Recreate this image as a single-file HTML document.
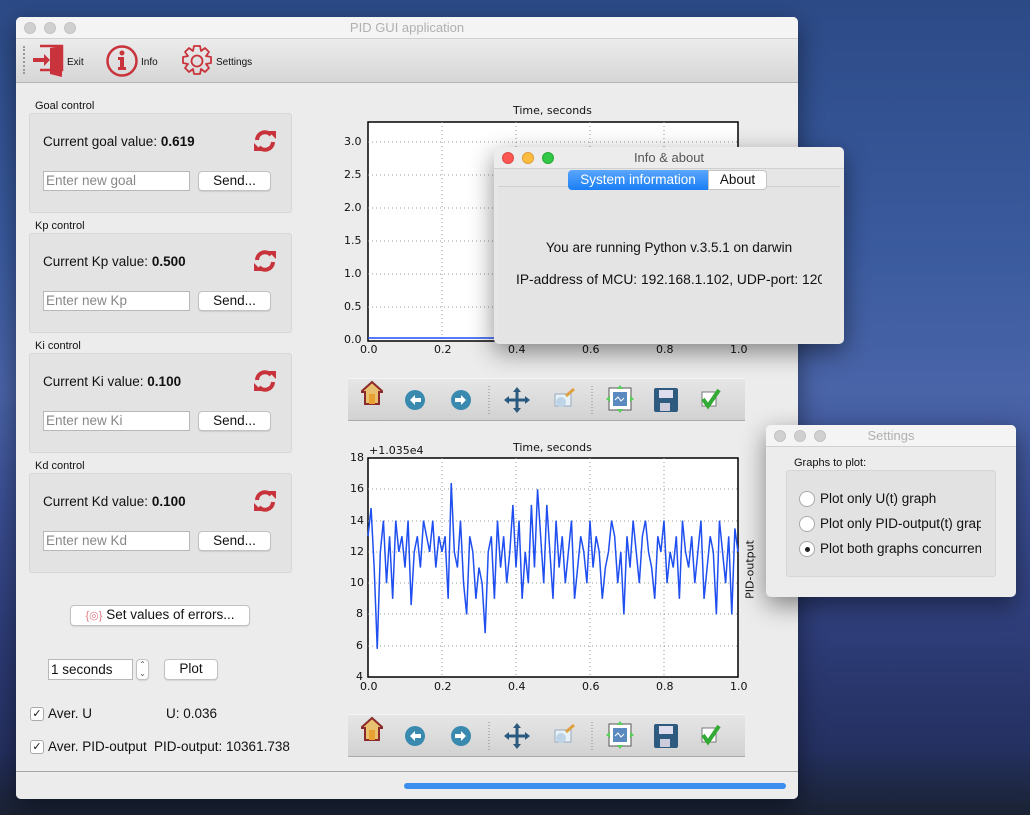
<!DOCTYPE html>
<html><head><meta charset="utf-8">
<style>
*{box-sizing:border-box;margin:0;padding:0}
body{width:1030px;height:815px;overflow:hidden;position:relative;font-family:"Liberation Sans",sans-serif;color:#111;
background:linear-gradient(180deg,#2c4a86 0%,#3a5a9e 30%,#4a64a8 48%,#3a4e92 62%,#2c3a74 80%,#243060 92%,#1a2232 100%);}
.abs{position:absolute}
.win{position:absolute;background:#ececec;border-radius:5px;box-shadow:0 8px 25px rgba(0,0,0,.45)}
.tb{position:absolute;left:0;right:0;top:0;height:21px;background:#f4f4f4;border-bottom:1px solid #d0d0d0;border-radius:5px 5px 0 0;text-align:center;font-size:13px;color:#b0b0b0;line-height:21px}
.dot{position:absolute;top:5px;width:12px;height:12px;border-radius:50%;background:#d0d0d0;border:1px solid #c4c4c4}
.lbl{position:absolute;font-size:11px}
.grp{position:absolute;left:29px;width:263px;height:100px;background:#e3e3e3;border:1px solid #d6d6d6;border-radius:3px}
.cur{position:absolute;left:13px;top:20px;font-size:13.5px}
.inp{position:absolute;left:13px;top:57px;width:147px;height:20px;background:#fff;border:1px solid #b8b8b8;font-size:13.5px;color:#888;padding-left:2px;line-height:18px}
.btn{position:absolute;background:#fff;border:1px solid #c2c2c2;border-radius:4px;font-size:13.5px;text-align:center;line-height:18px;box-shadow:0 1px 1px rgba(0,0,0,.1)}
.ref{position:absolute;left:222px;top:14px}
.ptb{position:absolute;left:348px;width:397px;height:43px;background:linear-gradient(#e6e6e6,#d2d2d2);border-bottom:1px solid #aaa;border-top:1px solid #f4f4f4}
.tick{position:absolute;font-size:11px;font-family:"DejaVu Sans",sans-serif;color:#111}
.cb{position:absolute;left:30px;width:14px;height:14px;background:#fff;border:1px solid #aaa;border-radius:3px;font-size:11px;line-height:12px;text-align:center}
.rad{position:absolute;left:799px;width:16px;height:16px;border-radius:50%;background:#fff;border:1px solid #aaa}
</style></head><body>

<!-- main window -->
<div class="win" style="left:16px;top:17px;width:782px;height:782px;">
  <div class="tb" style="height:22px">PID GUI application</div>
  <div class="dot" style="left:8px"></div><div class="dot" style="left:28px"></div><div class="dot" style="left:48px"></div>
  <div class="abs" style="left:0;top:22px;width:782px;height:44px;background:linear-gradient(#ececec,#d6d6d6);border-bottom:1px solid #b4b4b4"></div>
  <div class="abs" style="left:0;bottom:0;width:782px;height:28px;background:#ececec;border-top:1px solid #a8a8a8;border-radius:0 0 5px 5px"></div>
  <div class="abs" style="left:388px;top:766px;width:382px;height:6px;border-radius:3px;background:#3b8ef0"></div>
</div>

<!-- toolbar -->
<div class="abs" style="left:23px;top:46px;width:2px;height:28px;border-left:2px dotted #999"></div>
<svg class="abs" style="left:30px;top:43px" width="36" height="36" viewBox="0 0 36 36">
  <path d="M10 3h22v24h-22" fill="none" stroke="#c9333b" stroke-width="2.5"/>
  <path d="M20 5l12-2v31l-12-3z" fill="#c9333b"/>
  <path d="M3 15h11v-4l6 6-6 6v-4h-11z" fill="#c9333b"/>
</svg>
<div class="lbl" style="left:67px;top:57px;font-size:10px">Exit</div>
<svg class="abs" style="left:105px;top:44px" width="34" height="34" viewBox="0 0 34 34">
  <circle cx="17" cy="17" r="14.5" fill="none" stroke="#c9333b" stroke-width="2.5"/>
  <circle cx="17" cy="9" r="2.5" fill="#c9333b"/>
  <path d="M13 13h6v10h2v3h-8v-3h2v-7h-2z" fill="#c9333b"/>
</svg>
<div class="lbl" style="left:141px;top:57px;font-size:10px">Info</div>
<svg class="abs" style="left:180px;top:44px" width="34" height="34" viewBox="-17 -17 34 34">
  <path d="M-3 -15h6l1 5 4-3 4 4-3 4 5 1v6l-5 1 3 4-4 4-4-3-1 5h-6l-1-5-4 3-4-4 3-4-5-1v-6l5-1-3-4 4-4 4 3z" fill="none" stroke="#c9333b" stroke-width="1.8" stroke-linejoin="round"/>
  <circle r="5.5" fill="none" stroke="#c9333b" stroke-width="1.8"/>
</svg>
<div class="lbl" style="left:216px;top:57px;font-size:10px">Settings</div>

<!-- groups -->
<div class="lbl" style="left:35px;top:100px">Goal control</div>
<div class="grp" style="top:113px"><div class="cur">Current goal value: <b>0.619</b></div>
<svg class="ref" width="26" height="26" viewBox="-13 -13 26 26"><path d="M-8 -1a8 8 0 0 1 14-5" fill="none" stroke="#c9333b" stroke-width="4"/><path d="M3 -10l8 0 0 8z" fill="#c9333b"/><path d="M8 1a8 8 0 0 1-14 5" fill="none" stroke="#c9333b" stroke-width="4"/><path d="M-3 10l-8 0 0-8z" fill="#c9333b"/></svg>
<div class="inp">Enter new goal</div><div class="btn" style="left:168px;top:57px;width:73px;height:20px">Send...</div></div>

<div class="lbl" style="left:35px;top:220px">Kp control</div>
<div class="grp" style="top:233px"><div class="cur">Current Kp value: <b>0.500</b></div>
<svg class="ref" width="26" height="26" viewBox="-13 -13 26 26"><path d="M-8 -1a8 8 0 0 1 14-5" fill="none" stroke="#c9333b" stroke-width="4"/><path d="M3 -10l8 0 0 8z" fill="#c9333b"/><path d="M8 1a8 8 0 0 1-14 5" fill="none" stroke="#c9333b" stroke-width="4"/><path d="M-3 10l-8 0 0-8z" fill="#c9333b"/></svg>
<div class="inp">Enter new Kp</div><div class="btn" style="left:168px;top:57px;width:73px;height:20px">Send...</div></div>

<div class="lbl" style="left:35px;top:340px">Ki control</div>
<div class="grp" style="top:353px"><div class="cur">Current Ki value: <b>0.100</b></div>
<svg class="ref" width="26" height="26" viewBox="-13 -13 26 26"><path d="M-8 -1a8 8 0 0 1 14-5" fill="none" stroke="#c9333b" stroke-width="4"/><path d="M3 -10l8 0 0 8z" fill="#c9333b"/><path d="M8 1a8 8 0 0 1-14 5" fill="none" stroke="#c9333b" stroke-width="4"/><path d="M-3 10l-8 0 0-8z" fill="#c9333b"/></svg>
<div class="inp">Enter new Ki</div><div class="btn" style="left:168px;top:57px;width:73px;height:20px">Send...</div></div>

<div class="lbl" style="left:35px;top:460px">Kd control</div>
<div class="grp" style="top:473px"><div class="cur">Current Kd value: <b>0.100</b></div>
<svg class="ref" width="26" height="26" viewBox="-13 -13 26 26"><path d="M-8 -1a8 8 0 0 1 14-5" fill="none" stroke="#c9333b" stroke-width="4"/><path d="M3 -10l8 0 0 8z" fill="#c9333b"/><path d="M8 1a8 8 0 0 1-14 5" fill="none" stroke="#c9333b" stroke-width="4"/><path d="M-3 10l-8 0 0-8z" fill="#c9333b"/></svg>
<div class="inp">Enter new Kd</div><div class="btn" style="left:168px;top:57px;width:73px;height:20px">Send...</div></div>

<div class="btn" style="left:70px;top:605px;width:180px;height:21px"><span style="color:#e07a86;font-size:11px">{◎}</span> Set values of errors...</div>
<div class="abs" style="left:48px;top:659px;width:85px;height:21px;background:#fff;border:1px solid #b8b8b8;font-size:13.5px;padding-left:2px;line-height:19px">1 seconds</div>
<div class="btn" style="left:136px;top:659px;width:13px;height:21px;font-size:8px;line-height:9px;color:#555">⌃<br>⌄</div>
<div class="btn" style="left:164px;top:659px;width:54px;height:21px">Plot</div>
<div class="cb" style="top:707px">✓</div><div class="abs" style="left:48px;top:706px;font-size:13.5px">Aver. U</div>
<div class="abs" style="left:166px;top:706px;font-size:13.5px">U: 0.036</div>
<div class="cb" style="top:740px">✓</div><div class="abs" style="left:48px;top:739px;font-size:13.5px">Aver. PID-output</div>
<div class="abs" style="left:154px;top:739px;font-size:13.5px">PID-output: 10361.738</div>

<!-- plots -->
<svg class="abs" style="left:0;top:0" width="1030" height="815">
  <rect x="368" y="122" width="370" height="219" fill="#fff" stroke="#000" stroke-width="1.5"/>
  <g stroke="#999" stroke-dasharray="1,3">
    <path d="M442 122v219M516 122v219M590 122v219M664 122v219"/>
    <path d="M368 142h370M368 175h370M368 208h370M368 241h370M368 274h370M368 307h370"/>
  </g>
  <path d="M368 338h130" stroke="#1f4ff0" stroke-width="1.5"/>
  <rect x="368" y="458" width="370" height="219" fill="#fff" stroke="#000" stroke-width="1.5"/>
  <g stroke="#999" stroke-dasharray="1,3">
    <path d="M442 458v219M516 458v219M590 458v219M664 458v219"/>
    <path d="M368 489h370M368 521h370M368 552h370M368 583h370M368 614h370M368 646h370"/>
  </g>
  <g transform="translate(368,677) scale(3.083,-15.64) translate(0,-4)">
  <polyline vector-effect="non-scaling-stroke" fill="none" stroke="#1f4ff0" stroke-width="1.5" points="0,13 1,14.8 2,11 3,5.8 4,12 5,14 6,10 7,13 8,9 9,14 10,12 11,13 12,11 13,14 14,8.6 15,12 16,13 17,11 18,14 19,13 20,12 21,14 22,11 23,13 24,12 25,13 26,9 27,16.4 28,12 29,11 30,14 31,10 32,8 33,13 34,12 35,9 36,11 37,10 38,6.8 39,12 40,13 41,9 42,14 43,11 44,13 45,10 46,12 47,15 48,11 49,14 50,9 51,12 52,10 53,15 54,11 55,16 56,13 57,10 58,15 59,12 60,9 61,14 62,11 63,13 64,10 65,12 66,14 67,9 68,11 69,13 70,12 71,10 72,14 73,11 74,13 75,12 76,9 77,11 78,12 79,14 80,13 81,10 82,12 83,8 84,13 85,11 86,14 87,12 88,10 89,13 90,14 91,12 92,11 93,9 94,13 95,12 96,14 97,10 98,12 99,11 100,13 101,9 102,14 103,12 104,11 105,13 106,10 107,12 108,14 109,9 110,11 111,13 112,12 113,8 114,14 115,12 116,10 117,13 118,8 119,13.5 120,12"/>
  </g>
</svg>
<div class="abs" style="left:513px;top:104px;font-size:11px;font-family:'DejaVu Sans',sans-serif">Time, seconds</div>
<div class="tick" style="left:344px;top:135px">3.0</div><div class="tick" style="left:344px;top:168px">2.5</div><div class="tick" style="left:344px;top:201px">2.0</div><div class="tick" style="left:344px;top:234px">1.5</div><div class="tick" style="left:344px;top:267px">1.0</div><div class="tick" style="left:344px;top:300px">0.5</div><div class="tick" style="left:344px;top:333px">0.0</div>
<div class="tick" style="left:360px;top:343px">0.0</div><div class="tick" style="left:434px;top:343px">0.2</div><div class="tick" style="left:508px;top:343px">0.4</div><div class="tick" style="left:582px;top:343px">0.6</div><div class="tick" style="left:656px;top:343px">0.8</div><div class="tick" style="left:730px;top:343px">1.0</div>

<div class="abs" style="left:513px;top:441px;font-size:11px;font-family:'DejaVu Sans',sans-serif">Time, seconds</div>
<div class="tick" style="left:369px;top:444px">+1.035e4</div>
<div class="tick" style="left:350px;top:451px">18</div><div class="tick" style="left:350px;top:482px">16</div><div class="tick" style="left:350px;top:514px">14</div><div class="tick" style="left:350px;top:545px">12</div><div class="tick" style="left:350px;top:576px">10</div><div class="tick" style="left:356px;top:607px">8</div><div class="tick" style="left:356px;top:639px">6</div><div class="tick" style="left:356px;top:670px">4</div>
<div class="tick" style="left:360px;top:680px">0.0</div><div class="tick" style="left:434px;top:680px">0.2</div><div class="tick" style="left:508px;top:680px">0.4</div><div class="tick" style="left:582px;top:680px">0.6</div><div class="tick" style="left:656px;top:680px">0.8</div><div class="tick" style="left:730px;top:680px">1.0</div>
<div class="tick" style="left:718px;top:563px;transform:rotate(-90deg);width:64px;text-align:center">PID-output</div>

<!-- plot toolbars -->
<div class="ptb" style="top:378px"></div>
<div class="ptb" style="top:714px"></div>
<svg class="abs" style="left:348px;top:378px" width="397" height="43">
  <g id="tools">
  <path d="M14 13l10-9 10 9v1h-3v12h-14v-12h-3z" fill="#e8c070" stroke="#8b2a2a" stroke-width="2"/><rect x="21" y="16" width="6" height="10" fill="#e8a030"/>
  <circle cx="67" cy="22" r="10" fill="#3a8ab0"/><path d="M62 22l5-5v3h6v4h-6v3z" fill="#fff"/>
  <circle cx="113" cy="22" r="10" fill="#3a8ab0"/><path d="M118 22l-5-5v3h-6v4h6v3z" fill="#fff"/>
  <path d="M141 8v28" stroke="#888" stroke-dasharray="1,2"/>
  <path d="M169 12v20M159 22h20" stroke="#2a5a80" stroke-width="3"/><path d="M169 9l-4 5h8zM169 35l-4-5h8zM156 22l5-4v8zM182 22l-5-4v8z" fill="#2a5a80"/>
  <rect x="207" y="16" width="16" height="12" fill="#e8f0f8" stroke="#9ab"/><circle cx="213" cy="24" r="5" fill="#bcd4e6"/><path d="M218 18l8-7" stroke="#e0a040" stroke-width="3"/>
  <path d="M244 8v28" stroke="#888" stroke-dasharray="1,2"/>
  <rect x="261" y="10" width="22" height="22" fill="#fff" stroke="#555"/><rect x="265" y="14" width="14" height="14" fill="#5a8ac0"/><path d="M267 22l3-3 3 4 3-3" stroke="#fff" fill="none"/><path d="M272 7l-3 4h6zM272 35l-3-4h6zM258 21l4-3v6zM286 21l-4-3v6z" fill="#5c5"/>
  <rect x="306" y="10" width="24" height="24" rx="2" fill="#2e5a80"/><rect x="311" y="12" width="14" height="8" fill="#dde"/><rect x="312" y="25" width="10" height="8" fill="#ccd"/>
  <rect x="354" y="14" width="14" height="14" fill="#fff" stroke="#777"/><path d="M355 21l5 7 11-16" stroke="#3a3" stroke-width="4" fill="none"/>
  </g>
</svg>
<svg class="abs" style="left:348px;top:714px" width="397" height="43"><use href="#tools"/></svg>

<!-- info dialog -->
<div class="win" style="left:494px;top:147px;width:350px;height:197px;background:#e6e6e6;overflow:hidden">
  <div class="tb" style="height:22px;color:#555;background:#ececec">Info &amp; about</div>
  <div class="dot" style="left:8px;background:#fc5753;border-color:#df4744"></div>
  <div class="dot" style="left:28px;background:#fdbc40;border-color:#de9f34"></div>
  <div class="dot" style="left:48px;background:#33c748;border-color:#27aa35"></div>
  <div class="abs" style="left:4px;top:39px;width:342px;height:156px;border-top:1px solid #d0d0d0;background:#e4e4e4"></div>
  <div class="abs" style="left:74px;top:23px;width:140px;height:20px;background:linear-gradient(#5aa6fa,#1a7ef6);color:#fff;font-size:13.5px;text-align:center;line-height:20px;border-radius:4px 0 0 4px">System information</div>
  <div class="abs" style="left:214px;top:23px;width:59px;height:20px;background:#fff;border:1px solid #c4c4c4;font-size:13.5px;text-align:center;line-height:18px;border-radius:0 4px 4px 0">About</div>
  <div class="abs" style="left:0;width:350px;top:93px;text-align:center;font-size:13.5px">You are running Python v.3.5.1 on darwin</div>
  <div class="abs" style="left:22px;top:125px;width:306px;overflow:hidden;font-size:13.8px;white-space:nowrap">IP-address of MCU: 192.168.1.102, UDP-port: 12000</div>
</div>

<!-- settings dialog -->
<div class="win" style="left:766px;top:425px;width:250px;height:172px;">
  <div class="tb" style="height:22px">Settings</div>
  <div class="dot" style="left:8px"></div><div class="dot" style="left:28px"></div><div class="dot" style="left:48px"></div>
  <div class="abs" style="left:28px;top:32px;font-size:11px">Graphs to plot:</div>
  <div class="abs" style="left:20px;top:45px;width:210px;height:107px;background:#e2e2e2;border:1px solid #d6d6d6;border-radius:3px"></div>
</div>
<div class="rad" style="top:491px"></div><div class="abs" style="left:820px;top:491px;font-size:13.5px">Plot only U(t) graph</div>
<div class="rad" style="top:516px"></div><div class="abs" style="left:820px;top:516px;font-size:13.5px;width:161px;overflow:hidden;white-space:nowrap">Plot only PID-output(t) graph</div>
<div class="rad" style="top:541px"></div><div class="abs" style="left:805px;top:547px;width:5px;height:5px;border-radius:50%;background:#222"></div>
<div class="abs" style="left:820px;top:541px;font-size:13.5px;width:161px;overflow:hidden;white-space:nowrap">Plot both graphs concurrently</div>
</body></html>
